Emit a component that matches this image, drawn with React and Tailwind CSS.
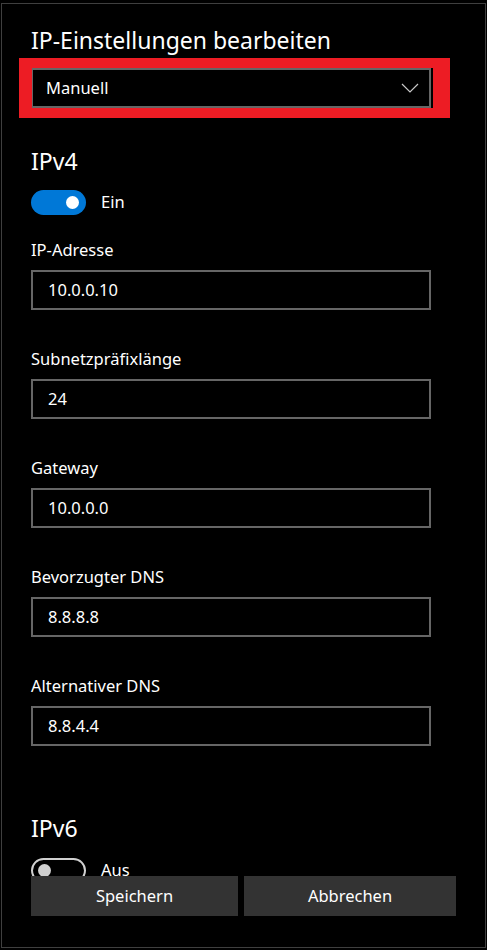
import React from "react";

const font = { fontFamily: '"Segoe UI", "Noto Sans", "Open Sans", sans-serif' };

function Field({ label, value }) {
  return (
    <div className="flex flex-col">
      <div className="text-[16.5px] leading-[24px] text-white h-[24px]">{label}</div>
      <div className="mt-[8px] w-[400px] h-[40px] border-2 border-[#666666] flex items-center pl-[15px] text-[16.5px] text-white">
        {value}
      </div>
    </div>
  );
}

export default function App() {
  return (
    <div className="w-[487px] h-[950px] bg-black overflow-hidden pt-[3px] pl-[1px]" style={font}>
      <div className="relative w-[485px] h-[945px] border border-[#3f3f3f] flex flex-col">
        <div className="flex-1 overflow-hidden pl-[29px]">
          <div className="mt-[20px] text-[23px] leading-[32px] text-white">IP-Einstellungen bearbeiten</div>
          <div className="mt-[12px] w-[400px] h-[40px] border-2 border-[#666666] flex items-center justify-between pl-[13px] pr-[10px] text-[16.5px] text-white">
            <span>Manuell</span>
            <svg width="18" height="10" viewBox="0 0 18 10" fill="none">
              <path d="M1 1 L9 9 L17 1" stroke="#c8c8c8" strokeWidth="1.2" />
            </svg>
          </div>
          <div className="mt-[37px] text-[23px] leading-[32px] text-white">IPv4</div>
          <div className="mt-[13px] flex items-center">
            <div className="w-[55px] h-[25px] rounded-full bg-[#0078d7] flex items-center justify-end pr-[7px]">
              <div className="w-[13px] h-[13px] rounded-full bg-white" />
            </div>
            <span className="ml-[15px] text-[16.5px] text-white">Ein</span>
          </div>
          <div className="mt-[23px] flex flex-col gap-[37px]">
            <Field label="IP-Adresse" value="10.0.0.10" />
            <Field label="Subnetzpräfixlänge" value="24" />
            <Field label="Gateway" value="10.0.0.0" />
            <Field label="Bevorzugter DNS" value="8.8.8.8" />
            <Field label="Alternativer DNS" value="8.8.4.4" />
          </div>
          <div className="mt-[66px] text-[23px] leading-[32px] text-white">IPv6</div>
          <div className="mt-[14px] flex items-center">
            <div className="w-[55px] h-[25px] rounded-full border-2 border-[#d0d0d0] flex items-center pl-[5px]">
              <div className="w-[13px] h-[13px] rounded-full bg-[#d0d0d0]" />
            </div>
            <span className="ml-[15px] text-[16.5px] text-white">Aus</span>
          </div>
        </div>
        <div className="h-[71px] shrink-0 bg-black flex pl-[29px] pr-[29px] gap-[6px]">
          <button className="w-[207px] h-[40px] bg-[#333333] text-white text-[16.5px]">Speichern</button>
          <button className="flex-1 h-[40px] bg-[#333333] text-white text-[16.5px]">Abbrechen</button>
        </div>
        <div className="absolute left-[17px] top-[54px] w-[431px] h-[60px] border-[#ed1c24] border-t-[10px] border-b-[10px] border-l-[13px] border-r-[17px]" />
      </div>
    </div>
  );
}
